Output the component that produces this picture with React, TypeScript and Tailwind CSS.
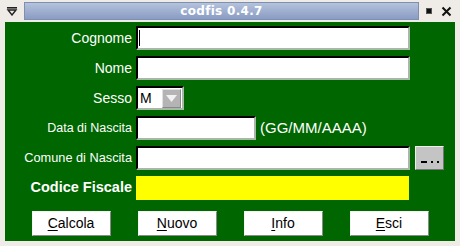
import { ReactNode } from "react";

const sans = { fontFamily: '"Liberation Sans", Arial, sans-serif' };
const title = { fontFamily: '"DejaVu Sans", sans-serif' };

function Row({ label, size, bold, children }: { label: string; size: string; bold?: boolean; children: ReactNode }) {
  return (
    <div className="flex items-center h-[24px]">
      <div className={`w-[131px] pr-[4px] text-right text-white whitespace-nowrap ${size} ${bold ? "font-bold" : ""}`}>
        {label}
      </div>
      {children}
    </div>
  );
}

function Field({ w }: { w: string }) {
  return (
    <div className={`${w} h-[24px] bg-white border-2 border-t-black border-l-black border-b-[#a8b8a8] border-r-[#a8b8a8]`} />
  );
}

function Btn({ u, rest }: { u: string; rest: string }) {
  return (
    <div className="w-[79px] h-[25px] bg-white border border-t-[#f4f4f4] border-l-[#f4f4f4] border-b-[#8a8a8a] border-r-[#8a8a8a] flex items-center justify-center text-[14px] text-black">
      <span className="underline underline-offset-2">{u}</span>
      {rest}
    </div>
  );
}

export default function App() {
  return (
    <div className="w-[460px] h-[246px] bg-[#efebe7] flex flex-col" style={sans}>
      {/* title bar */}
      <div className="h-[22px] flex items-center">
        <div className="w-[24px] flex justify-center">
          <svg width="12" height="10" viewBox="0 0 12 10">
            <rect x="1" y="1" width="10" height="1.6" fill="#222" />
            <path d="M2 4 L10 4 L6 9 Z" fill="none" stroke="#222" strokeWidth="1.4" />
          </svg>
        </div>
        <div className="w-[395px] h-[18px] mt-[-1px] bg-gradient-to-b from-[#b4c2dc] to-[#8a9cc4] border border-[#7f8fb0] flex items-center justify-center">
          <span className="text-white font-bold text-[12px] tracking-[0.3px]" style={title}>codfis 0.4.7</span>
        </div>
        <div className="flex-1 flex items-center justify-center gap-[10px]">
          <div className="w-[4px] h-[4px] bg-[#111] outline outline-1 outline-[#555]" />
          <svg width="11" height="11" viewBox="0 0 11 11">
            <path d="M1.5 1.5 L9.5 9.5 M9.5 1.5 L1.5 9.5" stroke="#111" strokeWidth="2" />
          </svg>
        </div>
      </div>

      {/* body */}
      <div className="mx-[5px] mb-[5px] flex-1 bg-[#006600] pt-[4px] flex flex-col">
        <div className="flex flex-col gap-[6px]">
          <Row label="Cognome" size="text-[14px]">
            <div className="w-[274px] h-[24px] bg-white border-2 border-t-black border-l-black border-b-[#a8b8a8] border-r-[#a8b8a8] flex items-center pl-[1px]">
              <div className="w-[1px] h-[16px] bg-black" />
            </div>
          </Row>
          <Row label="Nome" size="text-[14px]">
            <Field w="w-[274px]" />
          </Row>
          <Row label="Sesso" size="text-[14px]">
            <div className="w-[48px] h-[24px] bg-white border-2 border-t-black border-l-black border-b-[#a8b8a8] border-r-[#a8b8a8] flex items-center">
              <span className="text-[14px] text-black pl-[2px] flex-1">M</span>
              <div className="w-[19px] h-[19px] mr-[1px] bg-[#b4b4b4] border border-t-[#e0e0e0] border-l-[#e0e0e0] border-b-[#888] border-r-[#888] flex items-center justify-center">
                <svg width="11" height="7" viewBox="0 0 11 7">
                  <path d="M0 0 L11 0 L5.5 7 Z" fill="#f2f2f2" />
                </svg>
              </div>
            </div>
          </Row>
          <Row label="Data di Nascita" size="text-[12.5px]">
            <Field w="w-[120px]" />
            <span className="ml-[4px] text-white text-[15px]">(GG/MM/AAAA)</span>
          </Row>
          <Row label="Comune di Nascita" size="text-[12.75px]">
            <Field w="w-[274px]" />
            <div className="ml-[5px] w-[29px] h-[24px] bg-[#c4c4c4] border border-t-[#eee] border-l-[#eee] border-b-[#777] border-r-[#777] flex items-end justify-center pb-[6px] gap-[4px]">
              <div className="w-[6px] h-[2px] bg-black" />
              <div className="w-[2px] h-[2px] bg-black" />
              <div className="w-[2px] h-[2px] bg-black" />
            </div>
          </Row>
          <Row label="Codice Fiscale" size="text-[14.5px]" bold>
            <div className="w-[273px] h-[24px] bg-[#ffff00]" />
          </Row>
        </div>
        <div className="mt-[11px] flex justify-center gap-[27px]">
          <Btn u="C" rest="alcola" />
          <Btn u="N" rest="uovo" />
          <Btn u="I" rest="nfo" />
          <Btn u="E" rest="sci" />
        </div>
      </div>
    </div>
  );
}
